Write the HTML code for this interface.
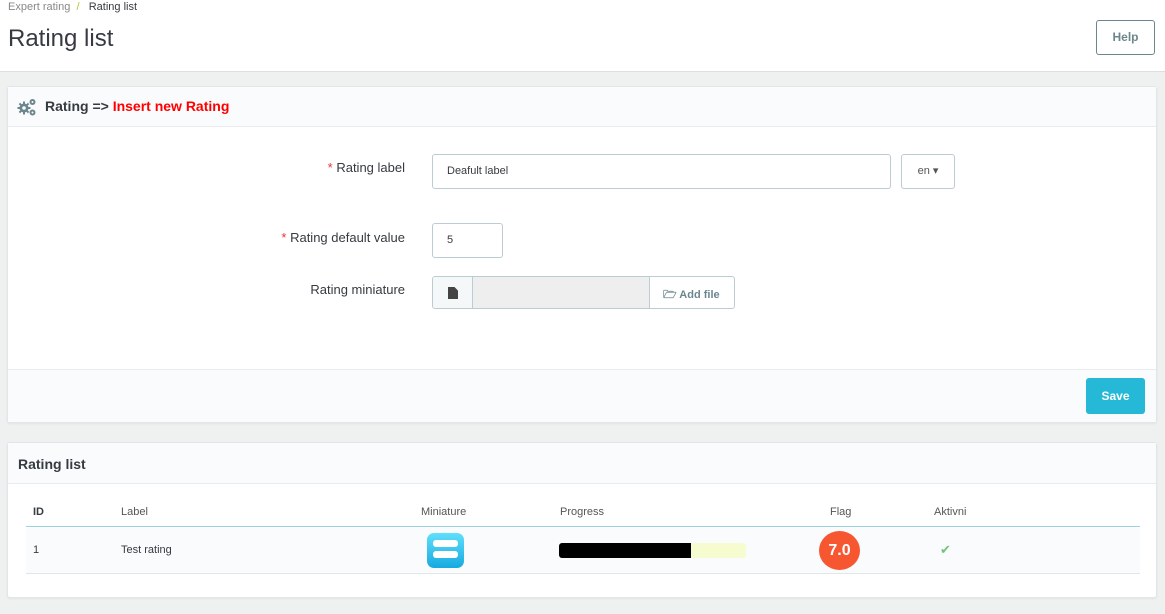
<!DOCTYPE html><html><head><style>
*{box-sizing:border-box;margin:0;padding:0}
body{width:1165px;height:614px;background:#eff1f1;font-family:"Liberation Sans",sans-serif;color:#363a41;position:relative;overflow:hidden;font-size:12px}
.a{position:absolute}
.top{left:0;top:0;width:1165px;height:72px;background:#fff;border-bottom:1px solid #dcdfe0}
.panel{background:#fff;border:1px solid #e3e6e8;box-shadow:0 1px 2px rgba(0,0,0,.06);border-radius:3px}
.ph{background:#fafbfc;border-bottom:1px solid #e8ecee}
.inp{border:1px solid #bbcdd2;border-radius:3px;background:#fff}
.lbl{font-size:13px;color:#363a41;text-align:right;width:300px}
.st{color:#e33;}
</style></head><body>
<div class="a top">
<div class="a" style="left:8px;top:1px;font-size:11px;color:#888">Expert rating &nbsp;<span style="color:#b8c43a">/</span>&nbsp;&nbsp; <span style="color:#363a41">Rating list</span></div>
<div class="a" style="left:8px;top:25px;font-size:24px;color:#363a41">Rating list</div>
<div class="a" style="left:1096px;top:20px;width:59px;height:35px;border:1px solid #6c868e;border-radius:3px;font-size:12px;font-weight:bold;color:#6c868e;text-align:center;line-height:33px">Help</div>
</div>
<div class="a panel" style="left:7px;top:86px;width:1150px;height:337px">
<div class="a ph" style="left:0;top:0;width:1148px;height:40px"></div>
<svg class="a" style="left:9px;top:10px" width="21" height="20" viewBox="0 0 21 20"><g fill="#6c868e"><circle cx="7" cy="11" r="4.5"/><rect x="6" y="4.5" width="2" height="13"/><rect x="0.5" y="10" width="13" height="2"/><rect x="6" y="4.5" width="2" height="13" transform="rotate(45 7 11)"/><rect x="6" y="4.5" width="2" height="13" transform="rotate(-45 7 11)"/><circle cx="15.5" cy="5" r="3"/><circle cx="15.5" cy="15.5" r="3"/></g><circle cx="7" cy="11" r="1.8" fill="#fafbfc"/><circle cx="15.5" cy="5" r="1" fill="#fafbfc"/><circle cx="15.5" cy="15.5" r="1" fill="#fafbfc"/></svg>
<div class="a" style="left:37px;top:11px;font-size:14px;font-weight:bold">Rating =&gt; <span style="color:#f00">Insert new Rating</span></div>
<div class="a lbl" style="left:97px;top:73px"><span class="st">*</span> Rating label</div>
<div class="a inp" style="left:424px;top:67px;width:459px;height:35px;padding:10px 14px;font-size:11px">Deafult label</div>
<div class="a inp" style="left:893px;top:67px;width:54px;height:35px;text-align:center;line-height:33px;font-size:11px;color:#555">en ▾</div>
<div class="a lbl" style="left:97px;top:143px"><span class="st">*</span> Rating default value</div>
<div class="a inp" style="left:424px;top:136px;width:71px;height:35px;padding:10px 14px;font-size:11px">5</div>
<div class="a lbl" style="left:97px;top:195px">Rating miniature</div>
<div class="a inp" style="left:424px;top:189px;width:303px;height:33px;overflow:hidden">
<div class="a" style="left:0;top:0;width:40px;height:33px;background:#f5f8f9;border-right:1px solid #bbcdd2"></div>
<div class="a" style="left:15px;top:10px;width:10px;height:12px;background:#444;clip-path:polygon(0 0,65% 0,100% 30%,100% 100%,0 100%)"></div>
<div class="a" style="left:40px;top:0;width:177px;height:33px;background:#eee;border-right:1px solid #bbcdd2"></div>
<div class="a" style="left:230px;top:9px;font-size:11px;color:#6c868e;font-weight:bold">🗁 Add file</div>
</div>
<div class="a ph" style="left:0;top:282px;width:1148px;height:53px;border-top:1px solid #e8ecee;border-bottom:0"></div>
<div class="a" style="left:1078px;top:291px;width:59px;height:36px;background:#25b9d7;border-radius:3px;color:#fff;font-weight:bold;text-align:center;line-height:36px">Save</div>
</div>
<div class="a panel" style="left:7px;top:442px;width:1150px;height:156px">
<div class="a ph" style="left:0;top:0;width:1148px;height:41px"></div>
<div class="a" style="left:10px;top:13px;font-size:14px;font-weight:bold">Rating list</div>
<div class="a" style="left:18px;top:40px;width:1114px;height:44px;border-bottom:1px solid #99d2e0;font-size:11px;color:#555">
<span class="a" style="left:7px;top:23px;font-weight:bold;color:#363a41">ID</span>
<span class="a" style="left:95px;top:23px">Label</span>
<span class="a" style="left:395px;top:23px">Miniature</span>
<span class="a" style="left:534px;top:23px">Progress</span>
<span class="a" style="left:804px;top:23px">Flag</span>
<span class="a" style="left:908px;top:23px">Aktivni</span></div>
<div class="a" style="left:18px;top:85px;width:1114px;height:46px;background:#fafbfc;border-bottom:1px solid #e3e6e8;font-size:11px">
<span class="a" style="left:7px;top:16px">1</span>
<span class="a" style="left:95px;top:16px">Test rating</span>
<div class="a" style="left:401px;top:5px;width:37px;height:35px;border-radius:7px;background:linear-gradient(#5fe0fb,#18a9e0)"></div>
<div class="a" style="left:407px;top:12px;width:25px;height:7px;border-radius:3px;background:#fff"></div>
<div class="a" style="left:407px;top:23px;width:25px;height:7px;border-radius:3px;background:#fff"></div>
<div class="a" style="left:533px;top:15px;width:187px;height:15px;border-radius:3px;background:#f7fcd0"></div>
<div class="a" style="left:533px;top:15px;width:132px;height:15px;border-radius:3px 0 0 3px;background:#000"></div>
<div class="a" style="left:793px;top:3px;width:41px;height:39px;border-radius:50%;background:#f75730;color:#fff;font-weight:bold;font-size:16px;text-align:center;line-height:39px">7.0</div>
<span class="a" style="left:914px;top:14px;color:#72c279;font-size:13px">✔</span>
</div>
</div>
</body></html>
